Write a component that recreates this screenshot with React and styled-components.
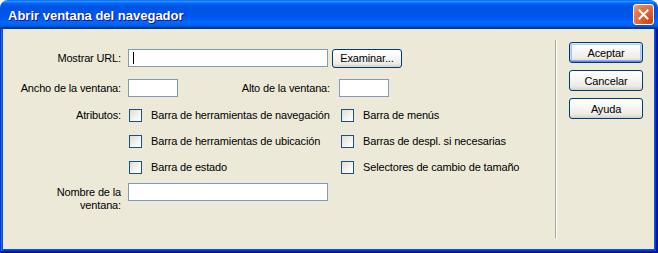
import React from "react";
import styled, { createGlobalStyle } from "styled-components";

const Global = createGlobalStyle`
  html, body { margin: 0; padding: 0; background: #ffffff; }
  #root { width: 658px; height: 253px; }
`;

const Window = styled.div`
  width: 658px;
  height: 253px;
  display: flex;
  flex-direction: column;
  font-family: "Liberation Sans", Arial, sans-serif;
  font-size: 11px;
  letter-spacing: -0.15px;
  color: #000;
`;

const TitleBar = styled.div`
  height: 29px;
  flex: none;
  display: flex;
  align-items: center;
  justify-content: space-between;
  padding: 0 4px 0 8px;
  border-radius: 8px 8px 0 0;
  background: linear-gradient(
    to bottom,
    #0058ee 0%,
    #3593ff 4%,
    #288eff 6%,
    #127dff 8%,
    #036ffc 10%,
    #0262ee 14%,
    #0057e5 20%,
    #0054e3 24%,
    #0055eb 56%,
    #005bf5 66%,
    #026afe 76%,
    #0062ef 86%,
    #0052d6 92%,
    #0040ab 94%,
    #003092 100%
  );
`;

const Title = styled.span`
  color: #fff;
  font-weight: bold;
  font-size: 13px;
  letter-spacing: 0;
  text-shadow: 1px 1px #0f1089;
  padding-top: 1px;
`;

const CloseButton = styled.div`
  width: 21px;
  height: 21px;
  box-sizing: border-box;
  border: 1px solid #fff;
  border-radius: 3px;
  display: flex;
  align-items: center;
  justify-content: center;
  background: radial-gradient(circle at 85% 85%, #cc4616 0%, #dc5a2c 35%, #e5784f 70%, #f1a287 100%);
`;

const Frame = styled.div`
  flex: 1;
  display: flex;
  padding: 0 4px 4px 3px;
  background: #0855dd;
  box-shadow: inset -1px -1px #00138c, inset 1px 0 #0831d9, inset -2px -2px #001ea0,
    inset 2px 0 #166aee, inset -3px -3px #003bda;
`;

const Body = styled.div`
  flex: 1;
  display: flex;
  background: #ece9d8;
`;

const Form = styled.div`
  width: 552px;
  display: flex;
  flex-direction: column;
  padding-top: 20px;
`;

const Row = styled.div`
  display: flex;
  align-items: ${(p) => (p.$top ? "flex-start" : "center")};
  height: ${(p) => p.$h}px;
  margin-top: ${(p) => p.$mt || 0}px;
`;

const Label = styled.div`
  width: ${(p) => p.$w || 118}px;
  flex: none;
  text-align: right;
  margin-right: ${(p) => p.$gap ?? 7}px;
  line-height: 13px;
  padding-top: ${(p) => p.$pt || 0}px;
  white-space: nowrap;
`;

const Field = styled.div`
  width: ${(p) => p.$w}px;
  height: 18px;
  box-sizing: border-box;
  flex: none;
  border: 1px solid #7f9db9;
  background: #fff;
  display: flex;
  align-items: center;
`;

const Caret = styled.span`
  width: 1px;
  height: 12px;
  margin-left: 4px;
  background: #000;
`;

const Button = styled.div`
  width: ${(p) => p.$w}px;
  height: ${(p) => p.$h}px;
  box-sizing: border-box;
  flex: none;
  display: flex;
  align-items: center;
  justify-content: center;
  border: 1px solid #003c74;
  border-radius: 3px;
  margin-left: ${(p) => p.$ml || 0}px;
  background: linear-gradient(to bottom, #ffffff 0%, #f7f7f4 40%, #ecebe6 80%, #d6d0c5 100%);
  box-shadow: ${(p) =>
    p.$default
      ? "inset 0 1px #cee7ff, inset 0 -1px #6982ee, inset 1px 0 #b8d2fa, inset -1px 0 #b8d2fa, inset 0 2px #bcd4f6, inset 0 -2px #89ade4, inset 2px 0 #a9c4f3, inset -2px 0 #a9c4f3"
      : "none"};
`;

const CheckCol = styled.div`
  width: ${(p) => p.$w}px;
  box-sizing: border-box;
  flex: none;
  display: flex;
  align-items: center;
  padding-left: 1px;
`;

const Box = styled.span`
  width: 13px;
  height: 13px;
  box-sizing: border-box;
  flex: none;
  border: 1px solid #1c5180;
  background: linear-gradient(135deg, #dcdcd7 0%, #f4f4f2 60%, #ffffff 100%);
  margin-right: 9px;
`;

const Separator = styled.div`
  width: 1px;
  margin: 11px 0 11px 0;
  background: #aca899;
  border-right: 1px solid #ffffff;
  flex: none;
`;

const Buttons = styled.div`
  display: flex;
  flex-direction: column;
  gap: 7px;
  padding: 13px 0 0 12px;
`;

function Check({ w, children }) {
  return (
    <CheckCol $w={w}>
      <Box />
      <span>{children}</span>
    </CheckCol>
  );
}

export default function App() {
  return (
    <>
      <Global />
      <Window>
        <TitleBar>
          <Title>Abrir ventana del navegador</Title>
          <CloseButton>
            <svg width="11" height="11" viewBox="0 0 11 11">
              <path d="M1.5 1.5 L9.5 9.5 M9.5 1.5 L1.5 9.5" stroke="#fff" strokeWidth="2" strokeLinecap="square" />
            </svg>
          </CloseButton>
        </TitleBar>
        <Frame>
          <Body>
            <Form>
              <Row $h={18}>
                <Label>Mostrar URL:</Label>
                <Field $w={200}>
                  <Caret />
                </Field>
                <Button $w={70} $h={19} $ml={4}>Examinar...</Button>
              </Row>
              <Row $h={18} $mt={12}>
                <Label>Ancho de la ventana:</Label>
                <Field $w={50} />
                <Label $w={152} $gap={9}>Alto de la ventana:</Label>
                <Field $w={50} />
              </Row>
              <Row $h={26} $mt={5}>
                <Label>Atributos:</Label>
                <Check w={212}>Barra de herramientas de navegación</Check>
                <Check w={200}>Barra de menús</Check>
              </Row>
              <Row $h={26}>
                <Label />
                <Check w={212}>Barra de herramientas de ubicación</Check>
                <Check w={200}>Barras de despl. si necesarias</Check>
              </Row>
              <Row $h={26}>
                <Label />
                <Check w={212}>Barra de estado</Check>
                <Check w={200}>Selectores de cambio de tamaño</Check>
              </Row>
              <Row $h={26} $mt={3} $top>
                <Label $pt={3}>
                  Nombre de la
                  <br />
                  ventana:
                </Label>
                <Field $w={200} />
              </Row>
            </Form>
            <Separator />
            <Buttons>
              <Button $w={74} $h={21} $default>Aceptar</Button>
              <Button $w={74} $h={21}>Cancelar</Button>
              <Button $w={74} $h={21}>Ayuda</Button>
            </Buttons>
          </Body>
        </Frame>
      </Window>
    </>
  );
}
